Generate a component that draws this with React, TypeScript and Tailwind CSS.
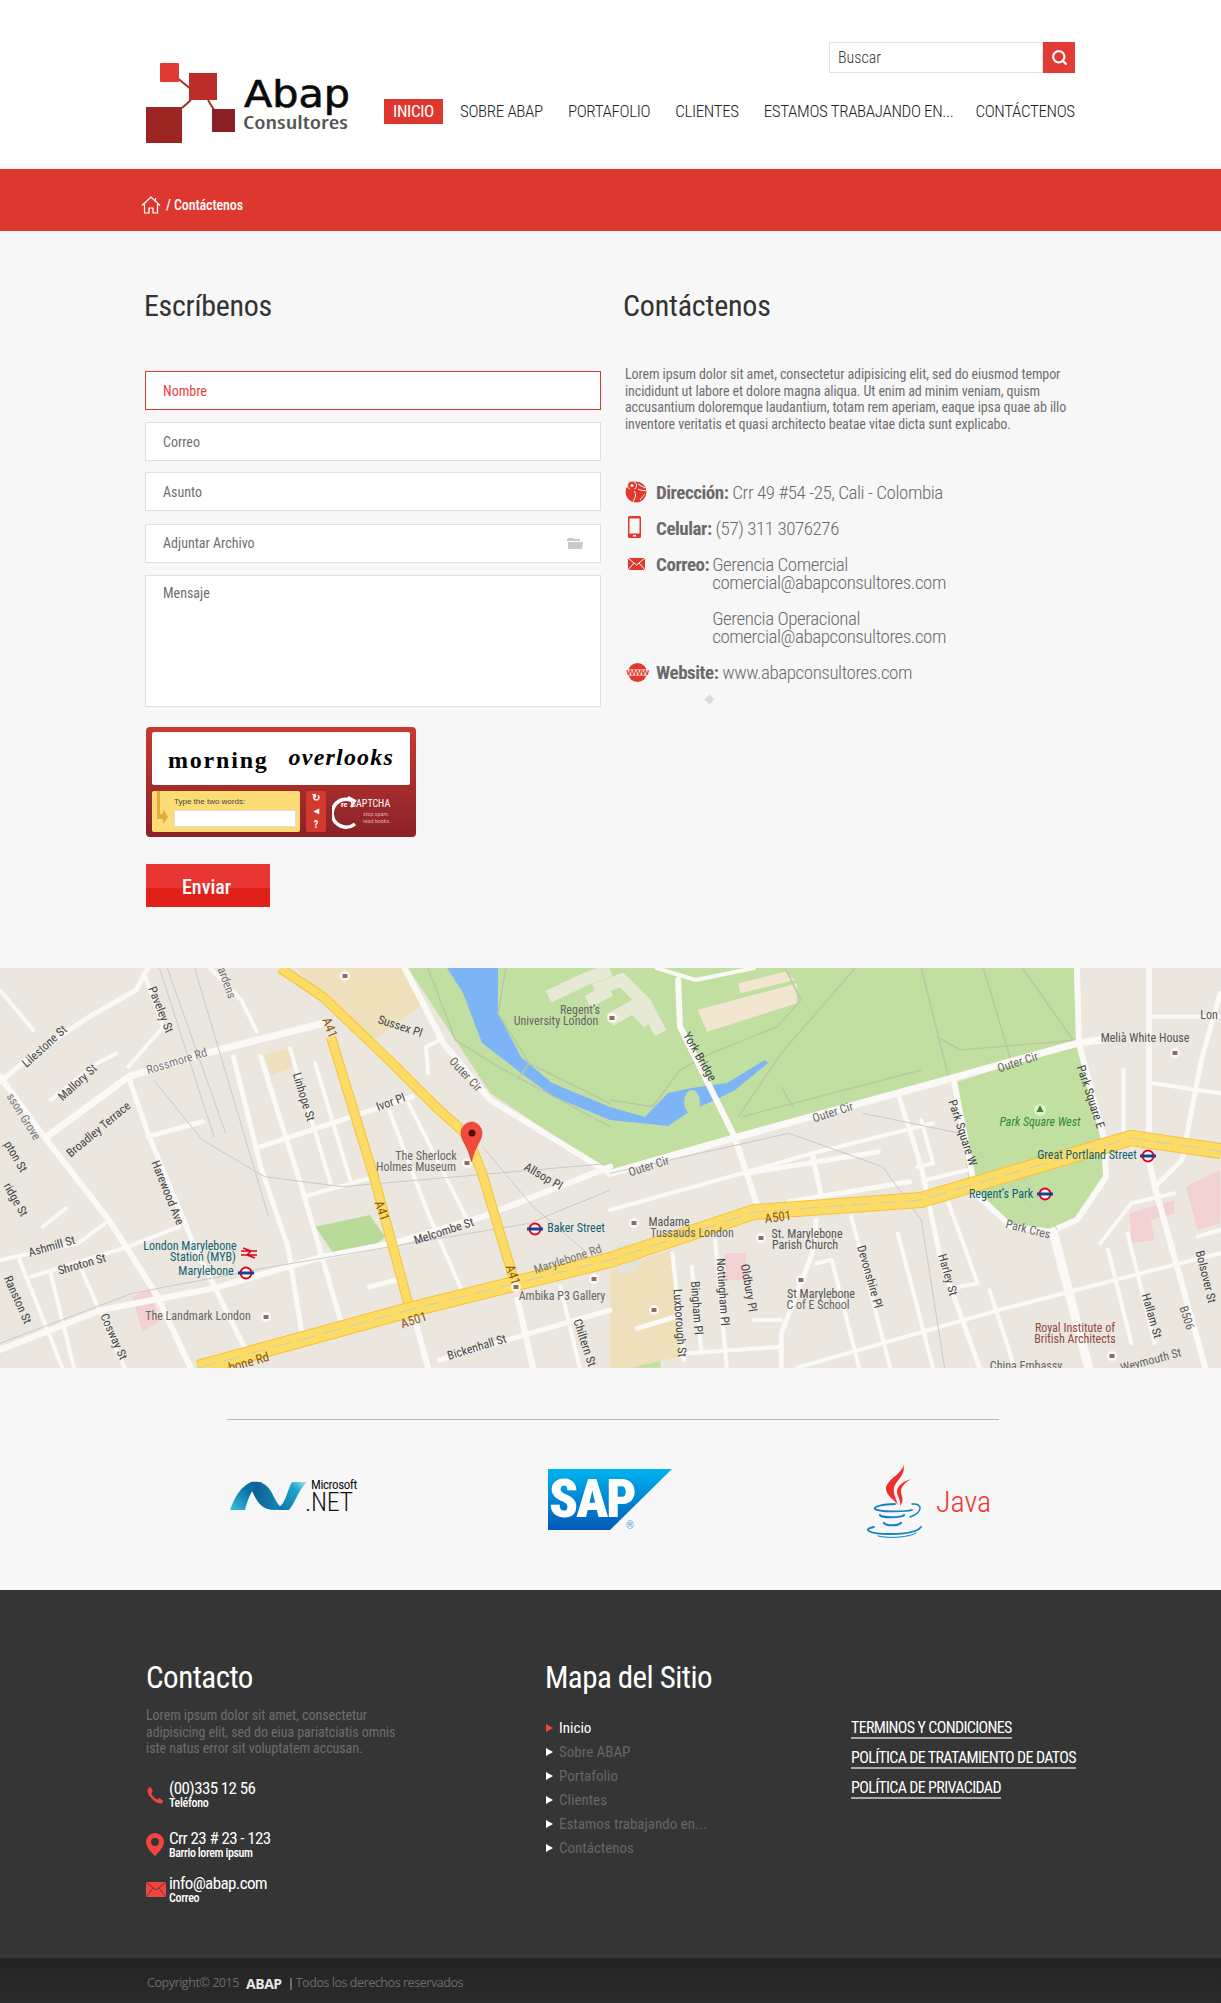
import React from 'react';
import { Search } from 'lucide-react';

type Pt = [number, number];

// road points are read off two halves of the map, hence the two converters
const L = (pts: Pt[]) => pts.map(([x, y]) => `${(x / 2.57).toFixed(1)},${(y / 3 - 8).toFixed(1)}`).join(' ');
const R = (pts: Pt[]) => pts.map(([x, y]) => `${(610 + x / 2.57).toFixed(1)},${(y / 3 - 8).toFixed(1)}`).join(' ');

const whiteLeft: [number, Pt[]][] = [
  [7, [[120, 530], [330, 350], [560, 270], [830, 190]]],
  [6, [[0, 350], [120, 540], [280, 780], [400, 1000], [490, 1223]]],
  [5, [[330, 350], [380, 520], [500, 860], [640, 1190]]],
  [5, [[600, 290], [670, 620], [740, 860], [780, 1150]]],
  [5, [[670, 290], [780, 700], [880, 1100]]],
  [4, [[745, 265], [850, 670]]],
  [4, [[810, 310], [900, 660]]],
  [5, [[670, 560], [1060, 410]]],
  [6, [[0, 1170], [260, 1050], [550, 985], [830, 890], [1010, 850], [1240, 770], [1568, 620]]],
  [4, [[780, 710], [950, 655]]],
  [4, [[1000, 450], [1100, 760], [1190, 1000]]],
  [4, [[1050, 430], [1210, 800]]],
  [5, [[380, 530], [520, 485]]],
  [6, [[1040, 24], [1140, 250], [1260, 420], [1568, 640]]],
  [5, [[1130, 1200], [1568, 1050]]],
  [4, [[80, 950], [330, 860], [460, 800]]],
  [4, [[0, 900], [200, 850], [270, 790]]],
  [4, [[130, 420], [250, 310], [300, 280]]],
  [5, [[0, 365], [100, 270], [230, 170], [350, 90], [380, 24]]],
  [4, [[370, 40], [420, 200], [330, 320]]],
  [4, [[0, 90], [85, 210]]],
  [4, [[50, 900], [160, 1223]]],
  [4, [[210, 930], [320, 1223]]],
  [4, [[130, 940], [190, 1223]]],
  [5, [[950, 980], [1020, 960]]],
  [6, [[1060, 1050], [1100, 1223]]],
  [6, [[1330, 1020], [1370, 1223]]],
  [4, [[1440, 980], [1490, 1223]]],
  [4, [[540, 24], [620, 120], [660, 215]]],
  [4, [[110, 800], [170, 745]]],
  [4, [[1100, 340], [1095, 260], [1130, 240]]],
];

const whiteRight: [number, Pt[]][] = [
  [7, [[0, 640], [330, 530], [830, 370], [1200, 250], [1260, 240]]],
  [6, [[175, 60], [180, 200], [320, 530], [385, 760]]],
  [4, [[120, 24], [220, 60], [370, 24]]],
  [6, [[1200, 24], [1205, 250], [1270, 540], [1275, 650], [1200, 780], [1130, 815], [1030, 800], [940, 700], [930, 640], [885, 370]]],
  [9, [[1140, 820], [1230, 1223]]],
  [6, [[1385, 24], [1385, 600], [1400, 680], [1530, 1223]]],
  [5, [[1568, 100], [1520, 300], [1480, 540], [1470, 600], [1400, 680]]],
  [4, [[1390, 170], [1568, 170]]],
  [4, [[1395, 370], [1568, 400]]],
  [4, [[1320, 330], [1320, 520]]],
  [5, [[350, 640], [690, 575]]],
  [4, [[0, 750], [340, 640], [520, 580], [830, 490]]],
  [5, [[740, 400], [800, 620], [850, 900], [950, 1223]]],
  [4, [[800, 480], [830, 610], [790, 620]]],
  [5, [[520, 580], [545, 720]]],
  [5, [[460, 725], [770, 665]]],
  [4, [[810, 660], [920, 630]]],
  [4, [[870, 730], [945, 970], [880, 985]]],
  [4, [[740, 820], [830, 1223]]],
  [4, [[620, 770], [720, 1223]]],
  [5, [[530, 780], [520, 880], [440, 1120], [440, 1223]]],
  [4, [[530, 910], [570, 900], [640, 1223]]],
  [4, [[270, 840], [300, 1223]]],
  [4, [[160, 880], [190, 1200]]],
  [4, [[210, 920], [235, 1170]]],
  [4, [[200, 1180], [440, 1160]]],
  [4, [[370, 1080], [440, 1080]]],
  [5, [[70, 1105], [170, 1070]]],
  [4, [[480, 1223], [1000, 1050], [1430, 920], [1568, 880]]],
  [4, [[1280, 870], [1340, 1150]]],
  [4, [[1330, 820], [1400, 1150]]],
  [4, [[975, 990], [1040, 1223]]],
  [4, [[1260, 850], [1340, 730], [1450, 700]]],
  [4, [[1510, 830], [1568, 810]]],
];

const parkPaths: string[] = [
  R([[0, 420], [110, 440], [180, 330], [260, 280], [430, 200], [490, 120], [450, 24]]),
  R([[800, 24], [870, 350]]),
  R([[960, 24], [1030, 300]]),
  R([[1060, 24], [1190, 240]]),
  R([[840, 230], [900, 270], [1200, 240]]),
  R([[440, 380], [470, 440]]),
  R([[340, 470], [800, 330]]),
  R([[630, 24], [440, 280], [330, 470]]),
  L([[1100, 24], [1170, 240], [1280, 320], [1568, 500]]),
  L([[1300, 24], [1280, 160], [1360, 310], [1568, 430]]),
  L([[1330, 360], [1360, 310]]),
];

const railLines: string[] = [
  L([[410, 24], [550, 530]]),
  L([[430, 24], [580, 520]]),
  L([[500, 24], [690, 770]]),
  L([[395, 360], [520, 540], [680, 650], [880, 680], [1568, 610]]),
  L([[0, 1150], [340, 1000], [700, 920], [1360, 790], [1568, 690]]),
  L([[1240, 560], [1370, 740], [1500, 870]]),
  R([[0, 640], [460, 520], [700, 620], [800, 780], [860, 1223]]),
  R([[650, 460], [900, 520], [1130, 800]]),
  R([[1040, 610], [1150, 810]]),
];

// text, x, y (centre of the label), angle, colour
const labels: [string, number, number, number, string?][] = [
  ['Paveley St', 160, 42, 68], ['Lilestone St', 45, 79, -42], ['Mallory St', 78, 115, -42],
  ['Rossmore Rd', 177, 94, -17, '#777'], ['sson Grove', 23, 149, 58, '#777'], ['Broadley Terrace', 99, 162, -40],
  ['Ranston St', 17, 332, 66], ['Ashmill St', 52, 279, -16], ['Shroton St', 82, 297, -16],
  ['Cosway St', 113, 369, 66], ['Harewood Ave', 167, 225, 68], ['Linhope St', 303, 129, 73],
  ['Sussex Pl', 400, 59, 18], ['Ivor Pl', 391, 135, -20], ['Outer Cir', 465, 107, 47, '#666'],
  ['Allsop Pl', 543, 209, 30], ['Melcombe St', 444, 264, -18], ['Marylebone Rd', 568, 292, -18, '#777'],
  ['Ambika P3 Gallery', 562, 329, 0, '#666'], ['Bickenhall St', 477, 380, -17], ['Chiltern St', 584, 375, 72],
  ['pton St', 15, 189, 60], ['ridge St', 15, 232, 60],
  ['The Landmark London', 198, 349, 0, '#666'], ['ardens', 226, 15, 70, '#777'],
  ['Regent\u2019s', 580, 43, 0, '#666'], ['University London', 556, 54, 0, '#666'],
  ['The Sherlock', 426, 189, 0, '#666'], ['Holmes Museum', 416, 200, 0, '#666'],
  ['York Bridge', 699, 89, 60], ['Outer Cir', 649, 199, -18, '#666'], ['Outer Cir', 833, 145, -18, '#666'],
  ['Outer Cir', 1018, 95, -18, '#666'], ['Park Square W', 962, 165, 72], ['Park Square E', 1090, 129, 72],
  ['Melià White House', 1145, 71, 0, '#555'], ['Park Cres', 1028, 262, 14, '#666'],
  ['Madame', 669, 255, 0, '#555'], ['Tussauds London', 692, 266, 0, '#666'],
  ['St. Marylebone', 807, 267, 0, '#555'], ['Parish Church', 805, 278, 0, '#555'],
  ['Devonshire Pl', 869, 309, 74], ['Harley St', 947, 307, 74], ['Oldbury Pl', 748, 320, 80],
  ['Nottingham Pl', 722, 324, 86], ['Bingham Pl', 696, 340, 86], ['Luxborough St', 679, 355, 86],
  ['St Marylebone', 821, 327, 0, '#555'], ['C of E School', 818, 338, 0, '#666'],
  ['Hallam St', 1151, 348, 74], ['B506', 1186, 350, 72, '#666'], ['Bolsover St', 1205, 309, 76],
  ['Royal Institute of', 1075, 361, 0, '#8f4a3e'], ['British Architects', 1075, 372, 0, '#8f4a3e'],
  ['Weymouth St', 1151, 393, -15, '#666'], ['Lon', 1209, 48, 0, '#555'], ['China Embassy', 1026, 399, 0, '#666'],
];

const transit: [string, number, number][] = [
  ['London Marylebone', 190, 279], ['Station (MYB)', 203, 290], ['Marylebone', 206, 304],
  ['Baker Street', 576, 261], ['Regent\u2019s Park', 1001, 227], ['Great Portland Street', 1087, 188],
];

const roadSigns: [string, number, number, number][] = [
  ['A41', 329, 60, 68], ['A41', 381, 243, 72], ['A41', 512, 307, 72],
  ['A501', 414, 353, -18], ['A501', 778, 250, -8], ['bone Rd', 249, 395, -16],
];

const poiDots: Pt[] = [[345, 8], [612, 50], [516, 319], [266, 349], [467, 195], [634, 255], [761, 270], [801, 312], [654, 342], [1175, 85], [1112, 388], [594, 311]];

const Roundel = ({ x, y }: { x: number; y: number }) => (
  <g>
    <circle cx={x} cy={y} r="5.500" fill="#fff" stroke="#e2001a" strokeWidth="2" />
    <rect x={x - 8} y={y - 1.500} width="16" height="3" fill="#1c3f94" />
  </g>
);

const MapView = () => (
  <svg viewBox="0 0 1221 400" className="block w-full h-[400px] bg-[#ebe7df]">
    <polygon points="408,0 490,125 610,205 738,169 933,115 1077,75 1077,0" fill="#c2dfa2" />
    <polygon points="954,115 1077,75 1102,172 1104,215 1077,252 1038,264 1003,255 972,225 968,209" fill="#c2dfa2" />
    <polygon points={L([[810, 800], [950, 765], [990, 830], [960, 860], [860, 885]])} fill="#b9db99" />
    <polygon points={R([[50, 1223], [130, 1200], [130, 1223]])} fill="#c2dfa2" />
    <polygon points="447,0 463,25 482,75 521,105 552,128 610,152 668,158 690,143 715,132 735,122 768,95 765,92 727,115 692,120 668,125 645,149 610,139 552,115 521,89 498,45 498,0" fill="#7db4f5" />
    <ellipse cx="692" cy="134" rx="8" ry="12" fill="#c2dfa2" />
    <polygon points="296,0 405,0 424,35 374,72 323,29" fill="#eee0bb" />
    <polygon points={L([[680, 285], [745, 265], [750, 325], [695, 345]])} fill="#eee0bb" />
    <polygon points={R([[225, 150], [480, 70], [480, 130], [250, 215]])} fill="#f3e6d1" />
    <polygon points={R([[330, 70], [450, 35], [475, 60], [335, 100]])} fill="#f3e6d1" />
    <polygon points={R([[0, 930], [155, 870], [180, 1190], [50, 1223], [0, 1223]])} fill="#eee0bb" />
    <polygon points={R([[1480, 680], [1568, 630], [1568, 790], [1510, 810]])} fill="#f2d2d0" />
    <polygon points={R([[1335, 760], [1450, 720], [1450, 760], [1390, 780], [1400, 840], [1340, 850]])} fill="#f2d2d0" />
    <polygon points={R([[295, 880], [350, 880], [350, 960], [300, 960]])} fill="#f2d2d0" />
    <polygon points={L([[340, 1010], [385, 985], [410, 1085], [365, 1115]])} fill="#f2d2d0" />
    <g fill="none" stroke="#e6ead5" strokeWidth="13">
      <polyline points={R([[-40, 90], [30, 60], [90, 130], [130, 220]])} />
      <polyline points={R([[0, 180], [60, 140], [100, 190]])} />
      <polyline points={L([[1410, 110], [1500, 60], [1568, 30]])} />
      <polyline points={L([[1510, 125], [1568, 90]])} />
    </g>
    <ellipse cx="626" cy="290" rx="14" ry="16" fill="#e4e3da" />

    <g fill="none" stroke="#b8c9a2" strokeWidth="1.500">
      {parkPaths.map((p, i) => <polyline key={i} points={p} />)}
    </g>
    <g fill="none" stroke="#faf9f6" strokeLinecap="round" strokeLinejoin="round">
      {whiteLeft.map(([w, p], i) => <polyline key={i} points={L(p)} strokeWidth={w} />)}
      {whiteRight.map(([w, p], i) => <polyline key={i} points={R(p)} strokeWidth={w} />)}
    </g>
    <g fill="none" stroke="#c9c9c9" strokeWidth="1">
      {railLines.map((p, i) => <polyline key={i} points={p} />)}
    </g>

    <g fill="none" strokeLinejoin="round">
      <g stroke="#f3c23c" strokeWidth="10">
        <polyline points="280,0 323,29 389,92 436,139 467,167 482,205 514,312" />
        <polyline points="331,69 374,209 410,342" />
      </g>
      <g stroke="#fcdc65" strokeWidth="8">
        <polyline points="280,0 323,29 389,92 436,139 467,167 482,205 514,312" />
        <polyline points="331,69 374,209 410,342" />
      </g>
      <polyline points="198,400 409,342 610,292 754,244 921,232 1131,170 1221,183" stroke="#f3c23c" strokeWidth="16" />
      <polyline points="198,400 409,342 610,292 754,244 921,232 1131,170 1221,183" stroke="#fcdc65" strokeWidth="14" />
      <polyline points="198,400 409,342 610,292 754,244 921,232 1131,170 1221,183" stroke="#cfcbbd" strokeWidth="1" strokeDasharray="18 8" />
    </g>

    <g fontFamily="Roboto, sans-serif" fontSize="12" textAnchor="middle" dominantBaseline="middle" style={{ fontStretch: '87%' }}>
      {labels.map(([t, x, y, a, c], i) => (
        <text key={i} x={x} y={y} fill={c ?? '#444'} transform={`rotate(${a} ${x} ${y})`}>{t}</text>
      ))}
      {transit.map(([t, x, y], i) => (
        <text key={i} x={x} y={y} fill="#0f6273">{t}</text>
      ))}
      <text x="1040" y="155" fill="#2f8a2f" fontStyle="italic">Park Square West</text>
      {roadSigns.map(([t, x, y, a], i) => (
        <text key={i} x={x} y={y} fill="#8a5a10" fontSize="13" transform={`rotate(${a} ${x} ${y})`}>{t}</text>
      ))}
    </g>

    <Roundel x={246} y={305} />
    <Roundel x={535} y={261} />
    <Roundel x={1045} y={226} />
    <Roundel x={1148} y={188} />
    <g stroke="#e2001a" strokeWidth="1.500" fill="none">
      <path d="M241 283h16M241 287h16M243 280l8 3-4 4 8 3" />
    </g>
    {poiDots.map(([x, y], i) => (
      <g key={i}>
        <circle cx={x} cy={y} r="5" fill="#fff" opacity="0.8" />
        <rect x={x - 2.500} y={y - 2} width="5" height="4" fill="#8d6e63" />
      </g>
    ))}
    <circle cx="1040" cy="142" r="6" fill="#dff0cc" />
    <path d="M1040 137l3.500 7h-7z" fill="#2f8a2f" />

    <path d="M472 154c-6 0-11 5-11 11 0 8 7 13 10.500 29 3.500-16 10.500-21 10.500-29 0-6-5-11-10-11z" fill="#f0493e" stroke="#c9352c" strokeWidth="0.500" />
    <circle cx="472" cy="165" r="3.500" fill="#5a0c08" />
  </svg>
);

const Logo = () => (
  <svg width="210" height="84" viewBox="0 0 210 84" className="block">
    <path d="M30 15L46 28M45 38L36 46M62 38L68 48" stroke="#a62b28" strokeWidth="2" fill="none" />
    <rect x="14" y="1" width="19" height="19" rx="1" fill="#e03c35" />
    <rect x="43" y="11" width="28" height="27" fill="#bb2d28" />
    <rect x="0" y="45" width="36" height="36" fill="#9c2422" />
    <rect x="66" y="47" width="23" height="23" fill="#8a1f26" />
    <text x="98" y="45" fontFamily="DejaVu Sans, sans-serif" fontSize="38" fill="#0a0a0a" stroke="#0a0a0a" strokeWidth="0.600" textLength="106" lengthAdjust="spacingAndGlyphs">Abap</text>
    <text x="97" y="67" fontFamily="Open Sans, sans-serif" fontSize="17" fontWeight="600" fill="#555" textLength="105" lengthAdjust="spacingAndGlyphs">Consultores</text>
  </svg>
);

const HomeIcon = () => (
  <svg width="20" height="18" viewBox="0 0 20 18" fill="none" stroke="#fff" strokeWidth="1.200">
    <path d="M1 9.500L10 1l9 8.500M3.500 8v9h4.500v-5h4v5h4.500V8" />
    <path d="M14.500 2v3" />
  </svg>
);

const DotNetLogo = () => (
  <div className="flex items-end w-[129px] h-[33px] self-start mt-[17px]">
    <svg width="80" height="32" viewBox="4 5 80 32" className="shrink-0">
      <defs>
        <linearGradient id="netA" x1="0" x2="1" y1="1" y2="0">
          <stop offset="0" stopColor="#3fc0da" />
          <stop offset="0.6" stopColor="#0a74aa" />
          <stop offset="1" stopColor="#0a5f96" />
        </linearGradient>
        <linearGradient id="netB" x1="0" x2="1" y1="0" y2="0">
          <stop offset="0" stopColor="#0b4f88" />
          <stop offset="1" stopColor="#1596c0" />
        </linearGradient>
        <linearGradient id="netC" x1="0" x2="1" y1="1" y2="0">
          <stop offset="0" stopColor="#0a6ea6" />
          <stop offset="0.7" stopColor="#1fa6cc" />
          <stop offset="1" stopColor="#a6e4f0" />
        </linearGradient>
      </defs>
      <path d="M26 7C42 5 46 16 50 24c3 6 6 9 12 10l-12 1C36 35 32 26 28 18c-2-5-4-8-8-7z" fill="url(#netB)" />
      <path d="M5 35C10 22 17 7 32 7h6C28 9 23 24 20 35z" fill="url(#netA)" />
      <path d="M50 33C60 33 61 18 67 7h15C74 14 70 28 64 35H54z" fill="url(#netC)" />
    </svg>
    <div className="-ml-[4px] flex flex-col items-start text-[#111] leading-none">
      <span className="ml-[6px] text-[13px] leading-[12px] tracking-[-0.4px] mb-[1px]">Microsoft</span>
      <span className="text-[26px] font-light [font-stretch:85%] tracking-[-0.3px] leading-[20px]">.NET</span>
    </div>
  </div>
);

const SapLogo = () => (
  <div className="relative w-[124px] h-[61px] ml-[190px]">
    <div className="w-full h-full bg-gradient-to-b from-[#00b4f0] to-[#0059b8] [clip-path:polygon(0_0,100%_0,50%_100%,0_100%)] pl-[1px] font-black [font-stretch:85%] text-white text-[53px] leading-[61px] tracking-[-2px]">
      SAP
    </div>
    <span className="absolute left-[78px] bottom-[-3px] text-[10px] text-[#5b9bd5]">®</span>
  </div>
);

const JavaLogo = () => (
  <div className="flex items-center ml-[188px]">
    <svg width="65" height="85" viewBox="0 0 65 85" fill="none" className="shrink-0">
      <path d="M43 7C45 15 27 22 26 31c-1 7 10 13 12 17-2-6-5-12-4-17C35 24 47 18 43 7z" fill="#f0302e" />
      <path d="M51 22c-7 2-15 7-14 14 1 4 4 8 3 13 5-6 1-10 1-14 0-6 5-10 10-13z" fill="#f0302e" />
      <g stroke="#1280c4" strokeLinecap="round">
        <path d="M35 47C22 47 13 50 15 52c3 3 30 3 37 1" strokeWidth="1.800" />
        <path d="M52 47c12-1 10 9-2 13" strokeWidth="1.500" />
        <path d="M20 58c0 3 22 3 24 0" strokeWidth="2.200" />
        <path d="M24 66c2 3 14 3 17 0" strokeWidth="2.200" />
        <path d="M14 70C2 72 8 77 30 77c18 0 28-3 31-7" strokeWidth="1.800" />
        <path d="M18 79c12 3 32 1 38-3" strokeWidth="1" />
      </g>
    </svg>
    <span className="ml-[11px] mt-[4px] font-[350] text-[#f0302e] text-[30px] leading-none">Java</span>
  </div>
);

const Captcha = () => (
  <div className="mt-[20px] ml-px w-[270px] h-[110px] rounded-[4px] bg-gradient-to-b from-[#c93a30] to-[#8a2228] p-[5px_6px] flex flex-col">
    <div className="h-[53px] rounded-[2px] bg-white flex items-center gap-[20px] pl-[16px] [font-family:'Liberation_Serif',serif] font-bold text-black [font-stretch:100%]">
      <span className="text-[24px] tracking-[1.800px] leading-none mt-[3px]">morning</span>
      <span className="text-[24px] italic tracking-[1.200px] leading-none -mt-[3px]">overlooks</span>
    </div>
    <div className="mt-[6px] flex gap-[6px]">
      <div className="relative w-[148px] h-[41px] rounded-[2px] bg-[#fedc75] pl-[22px] pr-[4px] pt-[6px] flex flex-col">
        <svg width="13" height="33" viewBox="0 0 13 33" fill="#e2ab3e" className="absolute left-[3px] top-0"><path d="M2 0h3v23h3v-5l5 8-5 7v-5H2z" /></svg>
        <span className="text-[8px] leading-[10px] text-[#444] [font-family:'Liberation_Sans',sans-serif] [font-stretch:100%]">Type the two words:</span>
        <div className="mt-[3px] h-[17px] bg-white border border-[#ddd]" />
      </div>
      <div className="w-[20px] h-[41px] rounded-[2px] bg-[#d23a30] flex flex-col items-center justify-around text-white text-[10px] leading-none font-bold">
        <span>↻</span>
        <span>◂</span>
        <span>?</span>
      </div>
      <div className="relative flex items-center text-white">
        <svg width="28" height="34" viewBox="0 0 28 34" fill="none" stroke="#fff" strokeWidth="3.500">
          <path d="M23 29A14 14 0 1 1 21 6" />
          <path d="M16 2l7 4-4 6" strokeWidth="2.500" />
        </svg>
        <div className="flex flex-col -ml-[19px] leading-none">
          <span className="text-[10px]"><b className="text-[8px] font-bold mr-[3px]">re</b>CAPTCHA</span>
          <span className="text-[6px] pl-[22px] mt-[2px] text-[#d9a7a7]">stop spam.</span>
          <span className="text-[6px] pl-[22px] mt-[1px] text-[#d9a7a7]">read books.</span>
        </div>
      </div>
    </div>
  </div>
);

const navItems = [
  { label: 'SOBRE ABAP', cls: 'ml-[17px]' },
  { label: 'PORTAFOLIO', cls: 'ml-[25px]' },
  { label: 'CLIENTES', cls: 'ml-[25px]' },
  { label: 'ESTAMOS TRABAJANDO EN...', cls: 'ml-[25px]' },
  { label: 'CONTÁCTENOS', cls: 'ml-[22px]' },
];

const siteLinks = ['Inicio', 'Sobre ABAP', 'Portafolio', 'Clientes', 'Estamos trabajando en...', 'Contáctenos'];

const fieldCls = 'block w-full h-[39px] bg-white border border-[#dedede] px-[17px] text-[14px] outline-none placeholder:text-[#6f6f6f]';

const App = () => {
  return (
    <div className="w-[1221px] h-[2003px] overflow-hidden bg-[#f7f7f7] [font-family:Roboto,sans-serif] [font-stretch:75%]">
      {/* Header */}
      <header className="h-[165px] bg-white">
        <div className="ml-[146px] w-[929px] flex">
          <div className="pt-[62px] w-[238px] shrink-0">
            <Logo />
          </div>
          <div className="flex-1 min-w-0 flex flex-col items-end pt-[42px]">
            <div className="flex h-[31px]">
              <input placeholder="Buscar" className="w-[214px] h-full border border-[#e2e2e2] px-[8px] text-[16px] font-light outline-none bg-white placeholder:text-[#333]" />
              <button className="w-[32px] h-full bg-[#e23b33] flex items-center justify-center">
                <Search size={17} color="#fff" strokeWidth={3} />
              </button>
            </div>
            <nav className="w-full mt-[26px] flex items-center text-[17px] font-[350] tracking-[-0.36px] text-[#222] whitespace-nowrap">
              <a className="h-[25px] px-[9px] bg-[#de372f] text-white font-normal leading-[25px]">INICIO</a>
              {navItems.map((n) => (
                <a key={n.label} className={n.cls}>{n.label}</a>
              ))}
            </nav>
          </div>
        </div>
      </header>

      {/* Breadcrumb */}
      <div className="mt-[4px] h-[62px] bg-[#de372f] pl-[141px] pt-[9px] flex items-center text-white text-[14px] font-medium tracking-[-0.1px]">
        <HomeIcon />
        <span className="ml-[5px] mt-[2px]">/ Contáctenos</span>
      </div>

      {/* Form + contact info */}
      <main className="h-[737px] ml-[145px] w-[930px] flex">
        <section className="w-[456px]">
          <h2 className="mt-[57px] -ml-px text-[30px] leading-[36px] tracking-[-0.3px] text-[#333]">Escríbenos</h2>
          <form className="mt-[47px] flex flex-col gap-[12px]">
            <input placeholder="Nombre" className={`${fieldCls} !border-[#dd3730] placeholder:!text-[#e8403a]`} />
            <input placeholder="Correo" className={fieldCls} />
            <input placeholder="Asunto" className={`${fieldCls} -mt-px`} />
            <div className="h-[39px] mt-px bg-white border border-[#dedede] px-[17px] flex items-center justify-between text-[14px] text-[#6f6f6f]">
              <span>Adjuntar Archivo</span>
              <svg width="16" height="11" viewBox="0 0 16 11" fill="#c9c9c9"><path d="M1 0h5l1 1h6v2H3L0 3V1zM1 4h15l-1 7H1z" /></svg>
            </div>
            <textarea placeholder="Mensaje" className="block w-full h-[132px] bg-white border border-[#dedede] px-[17px] py-[7px] text-[14px] outline-none resize-none placeholder:text-[#6f6f6f]" />
          </form>
          <Captcha />
          <button className="mt-[27px] ml-px pt-[3px] w-[124px] h-[43px] bg-[linear-gradient(#e83632_56%,#e2201a_56%)] text-white text-[20px] font-medium text-left pl-[36px]">Enviar</button>
        </section>

        <section className="ml-[21px] flex-1 text-[#6b6b6b]">
          <h2 className="mt-[57px] ml-[1px] text-[30px] leading-[36px] tracking-[-0.2px] text-[#333]">Contáctenos</h2>
          <p className="mt-[42px] ml-[3px] text-[14px] leading-[16.500px] tracking-[-0.1px] text-[#6f6f6f] w-[450px]">
            Lorem ipsum dolor sit amet, consectetur adipisicing elit, sed do eiusmod tempor incididunt ut labore et dolore magna aliqua. Ut enim ad minim veniam, quism accusantium doloremque laudantium, totam rem aperiam, eaque ipsa quae ab illo inventore veritatis et quasi architecto beatae vitae dicta sunt explicabo.
          </p>
          <ul className="mt-[52px] ml-[3px] text-[19px] leading-[18px] tracking-[-0.45px] font-light">
            <li className="flex h-[36px]">
              <span className="w-[31px] -mt-[4px]">
                <svg width="22" height="23" viewBox="0 0 22 23" fill="none">
                  <circle cx="11" cy="12" r="10.500" fill="#e2392f" />
                  <path d="M9 11c3 3 1 7-1 11M13 4l7 4M13 9c3 2 5 1 8 2M15 20c3-4 4-5 5-6" stroke="#f7f7f7" strokeWidth="1" />
                  <circle cx="7" cy="5.500" r="4.500" fill="#e2392f" stroke="#f7f7f7" />
                  <path d="M4 9l3 5 3-5z" fill="#e2392f" />
                  <circle cx="7" cy="5.500" r="1.500" fill="#f7f7f7" />
                </svg>
              </span>
              <span><b className="font-bold">Dirección:</b> Crr 49 #54 -25, Cali - Colombia</span>
            </li>
            <li className="flex h-[36px]">
              <span className="w-[31px] -mt-[4px] pl-[3px]">
                <svg width="13" height="22" viewBox="0 0 13 22"><rect width="13" height="22" rx="1.500" fill="#e2392f" /><rect x="1.500" y="2.500" width="10" height="15" fill="#f7f7f7" /><rect x="5" y="19" width="3" height="1.500" fill="#f7f7f7" /></svg>
              </span>
              <span><b className="font-bold">Celular:</b> (57) 311 3076276</span>
            </li>
            <li className="flex h-[108px]">
              <span className="w-[31px] pt-[2px] pl-[3px]">
                <svg width="17" height="12" viewBox="0 0 17 12"><rect width="17" height="12" fill="#e2392f" /><path d="M0 0l8.500 7L17 0M0 12l6-7M17 12l-6-7" stroke="#f7f7f7" strokeWidth="1" fill="none" /></svg>
              </span>
              <b className="font-bold">Correo:</b>
              <span className="ml-[3px]">
                Gerencia Comercial<br />comercial@abapconsultores.com<br /><br />Gerencia Operacional<br />comercial@abapconsultores.com
              </span>
            </li>
            <li className="flex h-[36px]">
              <span className="w-[31px] -mt-[1px] pl-[1px]">
                <svg width="23" height="19" viewBox="0 0 23 19"><circle cx="11.500" cy="9.500" r="9.500" fill="#e2392f" /><rect y="6.500" width="23" height="6" fill="#f7f7f7" /><text x="0.500" y="12" fontSize="8.500" fontWeight="700" fill="#e2392f" fontFamily="Liberation Sans, sans-serif" textLength="22" lengthAdjust="spacingAndGlyphs">www</text></svg>
              </span>
              <span><b className="font-bold">Website:</b> www.abapconsultores.com</span>
            </li>
          </ul>
          <div className="-mt-[4px] ml-[84px] w-[7px] h-[7px] rotate-45 bg-[#dcdcdc]" />
        </section>
      </main>

      {/* Map */}
      <MapView />

      {/* Technology logos */}
      <section className="h-[222px] pt-[51px]">
        <div className="ml-[227px] w-[772px] border-t border-[#bbb]" />
        <div className="ml-[229px] mt-[42px] flex items-center h-[75px]">
          <DotNetLogo />
          <SapLogo />
          <JavaLogo />
        </div>
      </section>

      {/* Footer */}
      <footer className="h-[368px] bg-[#353535] pl-[146px] flex">
        <div className="w-[399px]">
          <h3 className="mt-[69px] text-[31px] leading-[38px] tracking-[-0.5px] text-white">Contacto</h3>
          <p className="mt-[10px] w-[260px] text-[14px] leading-[16.500px] tracking-[-0.06px] text-[#6d6d6d]">
            Lorem ipsum dolor sit amet, consectetur adipisicing elit, sed do eiua pariatciatis omnis iste natus error sit voluptatem accusan.
          </p>
          <ul className="mt-[23px] flex flex-col">
            <li className="flex items-center h-[30px] mb-[20px]">
              <span className="w-[23px]">
                <svg width="18" height="18" viewBox="0 0 24 24" fill="#f2453d"><path d="M6 1l3 6-2 3c1 3 4 6 8 8l3-2 5 4-2 3c-3 1-9-1-14-7C2 11 1 6 3 3z" /></svg>
              </span>
              <div className="text-white leading-none">
                <div className="text-[17px] leading-[17px] tracking-[-0.6px]">(00)335 12 56</div>
                <div className="text-[12px] leading-[12px] font-medium tracking-[-0.3px]">Teléfono</div>
              </div>
            </li>
            <li className="flex items-center h-[30px] mb-[15px]">
              <span className="w-[23px]">
                <svg width="18" height="23" viewBox="0 0 18 23" fill="#f2453d"><path fillRule="evenodd" d="M9 0a9 9 0 0 1 9 9c0 5-5 10-9 14C5 19 0 14 0 9a9 9 0 0 1 9-9zm0 5a4 4 0 1 0 0 8 4 4 0 0 0 0-8z" /></svg>
              </span>
              <div className="text-white leading-none">
                <div className="text-[17px] leading-[17px] tracking-[-0.6px]">Crr 23 # 23 - 123</div>
                <div className="text-[12px] leading-[12px] font-medium tracking-[-0.4px]">Barrio lorem ipsum</div>
              </div>
            </li>
            <li className="flex items-center h-[30px]">
              <span className="w-[23px]">
                <svg width="20" height="15" viewBox="0 0 20 15"><rect width="20" height="15" fill="#f2453d" /><path d="M0 0l10 8 10-8M0 15l7-9M20 15l-7-9" stroke="#353535" strokeWidth="0.800" fill="none" /></svg>
              </span>
              <div className="text-white leading-none">
                <div className="text-[17px] leading-[17px] tracking-[-0.6px]">info@abap.com</div>
                <div className="text-[12px] leading-[12px] font-medium tracking-[-0.3px]">Correo</div>
              </div>
            </li>
          </ul>
        </div>
        <div className="w-[305px]">
          <h3 className="mt-[69px] text-[31px] leading-[38px] tracking-[-0.55px] text-white">Mapa del Sitio</h3>
          <ul className="mt-[19px] ml-px">
            {siteLinks.map((s, i) => (
              <li key={s} className={`flex items-center h-[24px] text-[15px] ${i === 0 ? 'text-white' : 'text-[#666]'}`}>
                <span className={`w-0 h-0 border-y-[4px] border-y-transparent border-l-[7px] mr-[6px] ${i === 0 ? 'border-l-[#f2453d]' : 'border-l-white'}`} />
                {s}
              </li>
            ))}
          </ul>
        </div>
        <div className="pt-[128px] pl-px flex flex-col items-start gap-[9px] text-[16px] leading-[19px] tracking-[-0.65px] text-white">
          <a className="border-b-2 border-[#aaa]">TERMINOS Y CONDICIONES</a>
          <a className="border-b-2 border-[#aaa]">POLÍTICA DE TRATAMIENTO DE DATOS</a>
          <a className="border-b-2 border-[#aaa]">POLÍTICA DE PRIVACIDAD</a>
        </div>
      </footer>

      {/* Copyright */}
      <div className="h-[45px] pt-[6px] bg-gradient-to-b from-[#232323] to-[#2b2b2b] pl-[147px] flex items-center [font-family:'Open_Sans',sans-serif] [font-stretch:100%] text-[12.500px] text-[#6b6b6b] tracking-[-0.45px]">
        <span>Copyright© 2015</span>
        <span className="ml-[7px] text-[14px] font-bold text-[#e6e6e6]">ABAP</span>
        <span className="ml-[8px] w-[2px] h-[12px] bg-[#6b6b6b]" />
        <span className="ml-[4px]">Todos los derechos reservados</span>
      </div>
    </div>
  );
};

export default App;
